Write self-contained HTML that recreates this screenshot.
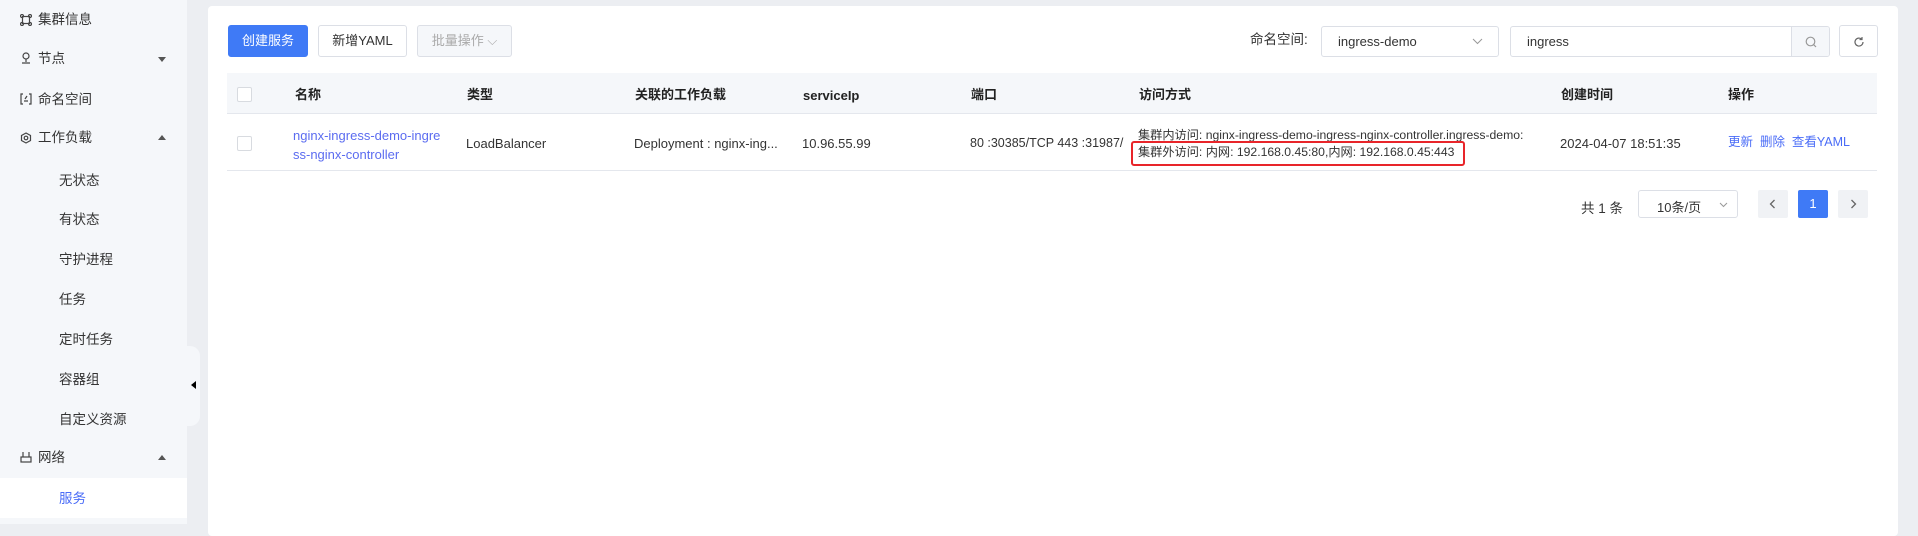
<!DOCTYPE html>
<html><head><meta charset="utf-8"><style>
*{box-sizing:border-box;margin:0;padding:0}
body{width:1918px;height:524px;overflow:hidden;background:#eceef2;font-family:"Liberation Sans","Noto Sans CJK SC",sans-serif;font-size:13px;color:#333;position:relative}
.a{position:absolute;white-space:nowrap}
#side{position:absolute;left:0;top:0;width:187px;height:524px;background:#f5f7fa}
.si{position:absolute;left:38px;font-size:13.5px;color:#333;line-height:18px}
.sub{position:absolute;left:59px;font-size:13.5px;color:#333;line-height:18px}
.ic{position:absolute;left:20px;width:12px;height:12px}
.tri{position:absolute;left:158px;width:0;height:0;border-left:4px solid transparent;border-right:4px solid transparent}
#card{position:absolute;left:208px;top:6px;width:1690px;height:530px;background:#fff;border-radius:4px}
.btn{position:absolute;top:25px;height:32px;border:1px solid #dcdfe6;border-radius:3px;text-align:center;line-height:30px;font-size:13px;background:#fff}
.th{position:absolute;top:86px;font-weight:bold;font-size:13px;color:#222;line-height:17px}
.td{position:absolute;font-size:13px;color:#333;white-space:nowrap;line-height:17px}
.cb{position:absolute;left:237px;width:15px;height:15px;border:1px solid #d8dbe0;border-radius:2px;background:#fff}
</style></head><body>
<div id="side">
  <svg class="ic" style="top:14px" viewBox="0 0 12 12" fill="none" stroke="#444" stroke-width="1.2"><rect x="2.5" y="2.5" width="7" height="7"/><circle cx="2" cy="2" r="1.5"/><circle cx="10" cy="2" r="1.5"/><circle cx="2" cy="10" r="1.5"/><circle cx="10" cy="10" r="1.5"/></svg>
  <div class="si" style="top:11px">集群信息</div>
  <svg class="ic" style="top:52px" viewBox="0 0 12 12" fill="none" stroke="#444" stroke-width="1.2"><circle cx="6" cy="4" r="3"/><path d="M6 7v3M2 11h8"/></svg>
  <div class="si" style="top:50px">节点</div>
  <div class="tri" style="top:57px;border-top:5px solid #555"></div>
  <svg class="ic" style="top:93px" viewBox="0 0 12 12" fill="none" stroke="#444" stroke-width="1.2"><path d="M3 1H1v10h2M9 1h2v10H9M4 8h4M7 3L5 6"/></svg>
  <div class="si" style="top:91px">命名空间</div>
  <svg class="ic" style="top:132px" viewBox="0 0 12 12" fill="none" stroke="#444" stroke-width="1.2"><path d="M6 1l4.5 2.5v5L6 11 1.5 8.5v-5z"/><circle cx="6" cy="6" r="1.8"/></svg>
  <div class="si" style="top:129px">工作负载</div>
  <div class="tri" style="top:135px;border-bottom:5px solid #555"></div>
  <div class="sub" style="top:172px">无状态</div>
  <div class="sub" style="top:211px">有状态</div>
  <div class="sub" style="top:251px">守护进程</div>
  <div class="sub" style="top:291px">任务</div>
  <div class="sub" style="top:331px">定时任务</div>
  <div class="sub" style="top:371px">容器组</div>
  <div class="sub" style="top:411px">自定义资源</div>
  <svg class="ic" style="top:451px" viewBox="0 0 12 12" fill="none" stroke="#444" stroke-width="1.2"><rect x="1" y="6" width="10" height="5"/><path d="M3 6V1M9 6V1"/></svg>
  <div class="si" style="top:449px">网络</div>
  <div class="tri" style="top:455px;border-bottom:5px solid #555"></div>
  <div style="position:absolute;left:0;top:478px;width:187px;height:40px;background:#fff"></div>
  <div class="sub" style="top:490px;color:#4a6cf7">服务</div>
</div>
<div style="position:absolute;left:187px;top:346px;width:13px;height:80px;background:#f5f7fa;border-radius:0 10px 10px 0"></div>
<div style="position:absolute;left:191px;top:381px;width:0;height:0;border-top:4px solid transparent;border-bottom:4px solid transparent;border-right:5px solid #000"></div>
<div id="card"></div>
<div class="btn" style="left:228px;width:80px;background:#3f7af6;border-color:#3f7af6;color:#fff">创建服务</div>
<div class="btn" style="left:318px;width:89px">新增YAML</div>
<div class="btn" style="left:417px;width:95px;background:#f5f7fa;color:#aaa">批量操作 ⌵</div>
<div class="a" style="left:1250px;top:31px;font-size:13.5px;line-height:18px">命名空间:</div>
<div class="a" style="left:1321px;top:26px;width:178px;height:31px;border:1px solid #dcdfe6;border-radius:3px"><span class="a" style="left:16px;top:7px">ingress-demo</span><svg class="a" style="left:150px;top:11px" width="11" height="7" viewBox="0 0 11 7" fill="none" stroke="#999"><path d="M1 1l4.5 4.5L10 1"/></svg></div>
<div class="a" style="left:1510px;top:26px;width:320px;height:31px;border:1px solid #dcdfe6;border-radius:3px;overflow:hidden"><span class="a" style="left:16px;top:7px">ingress</span><div class="a" style="left:280px;top:0;width:40px;height:31px;background:#f5f7fa;border-left:1px solid #dcdfe6"><svg class="a" style="left:13px;top:9px" width="12" height="12" viewBox="0 0 12 12" fill="none" stroke="#999" stroke-width="1.2"><circle cx="5.5" cy="5.5" r="4.3"/><path d="M8.7 8.7L11 11"/></svg></div></div>
<div class="a" style="left:1839px;top:25px;width:39px;height:32px;border:1px solid #dcdfe6;border-radius:3px"><svg class="a" style="left:13px;top:10px" width="12" height="12" viewBox="0 0 12 12" fill="none" stroke="#666" stroke-width="1.2"><path d="M10 6a4 4 0 1 1-1.2-2.8M9 1v2.5H6.5"/></svg></div>
<div class="a" style="left:227px;top:73px;width:1650px;height:41px;background:#f5f7fa;border-bottom:1px solid #e4e7ed"></div>
<div class="a" style="left:227px;top:170px;width:1650px;height:1px;background:#e4e7ed"></div>
<div class="cb" style="top:87px"></div>
<div class="th" style="left:295px">名称</div>
<div class="th" style="left:467px">类型</div>
<div class="th" style="left:635px">关联的工作负载</div>
<div class="th" style="left:803px;top:87px">serviceIp</div>
<div class="th" style="left:971px">端口</div>
<div class="th" style="left:1139px">访问方式</div>
<div class="th" style="left:1561px">创建时间</div>
<div class="th" style="left:1728px">操作</div>
<div class="cb" style="top:136px"></div>
<div class="td" style="left:293px;top:126px;color:#5b6cf0;line-height:19px">nginx-ingress-demo-ingre<br>ss-nginx-controller</div>
<div class="td" style="left:466px;top:135px">LoadBalancer</div>
<div class="td" style="left:634px;top:135px">Deployment : nginx-ing...</div>
<div class="td" style="left:802px;top:135px">10.96.55.99</div>
<div class="td" style="left:970px;top:135px;font-size:12.5px">80 :30385/TCP 443 :31987/</div>
<div class="td" style="left:1138px;top:127px;line-height:17px;font-size:12.2px">集群内访问: nginx-ingress-demo-ingress-nginx-controller.ingress-demo:<br>集群外访问: 内网: 192.168.0.45:80,内网: 192.168.0.45:443</div>
<div class="a" style="left:1131px;top:141px;width:334px;height:25px;border:2px solid #e8252a;border-radius:3px"></div>
<div class="td" style="left:1560px;top:135px">2024-04-07 18:51:35</div>
<div class="td" style="left:1728px;top:134px;color:#4a6cf7;font-size:12.5px">更新&nbsp;&nbsp;删除&nbsp;&nbsp;查看YAML</div>
<div class="a" style="left:1581px;top:197px;font-size:13.5px">共 1 条</div>
<div class="a" style="left:1638px;top:190px;width:100px;height:28px;border:1px solid #dcdfe6;border-radius:3px"><span class="a" style="left:18px;top:6px">10条/页</span><svg class="a" style="left:80px;top:11px" width="9" height="6" viewBox="0 0 9 6" fill="none" stroke="#999"><path d="M1 1l3.5 3.5L8 1"/></svg></div>
<div class="a" style="left:1758px;top:190px;width:30px;height:28px;background:#f0f2f5;border-radius:2px"><svg class="a" style="left:11px;top:9px" width="7" height="10" viewBox="0 0 7 10" fill="none" stroke="#666" stroke-width="1.3"><path d="M5.5 1L1.5 5l4 4"/></svg></div>
<div class="a" style="left:1798px;top:190px;width:30px;height:28px;background:#3f7af6;border-radius:2px;text-align:center;line-height:28px;color:#fff">1</div>
<div class="a" style="left:1838px;top:190px;width:30px;height:28px;background:#f0f2f5;border-radius:2px"><svg class="a" style="left:12px;top:9px" width="7" height="10" viewBox="0 0 7 10" fill="none" stroke="#666" stroke-width="1.3"><path d="M1.5 1l4 4-4 4"/></svg></div>
</body></html>
